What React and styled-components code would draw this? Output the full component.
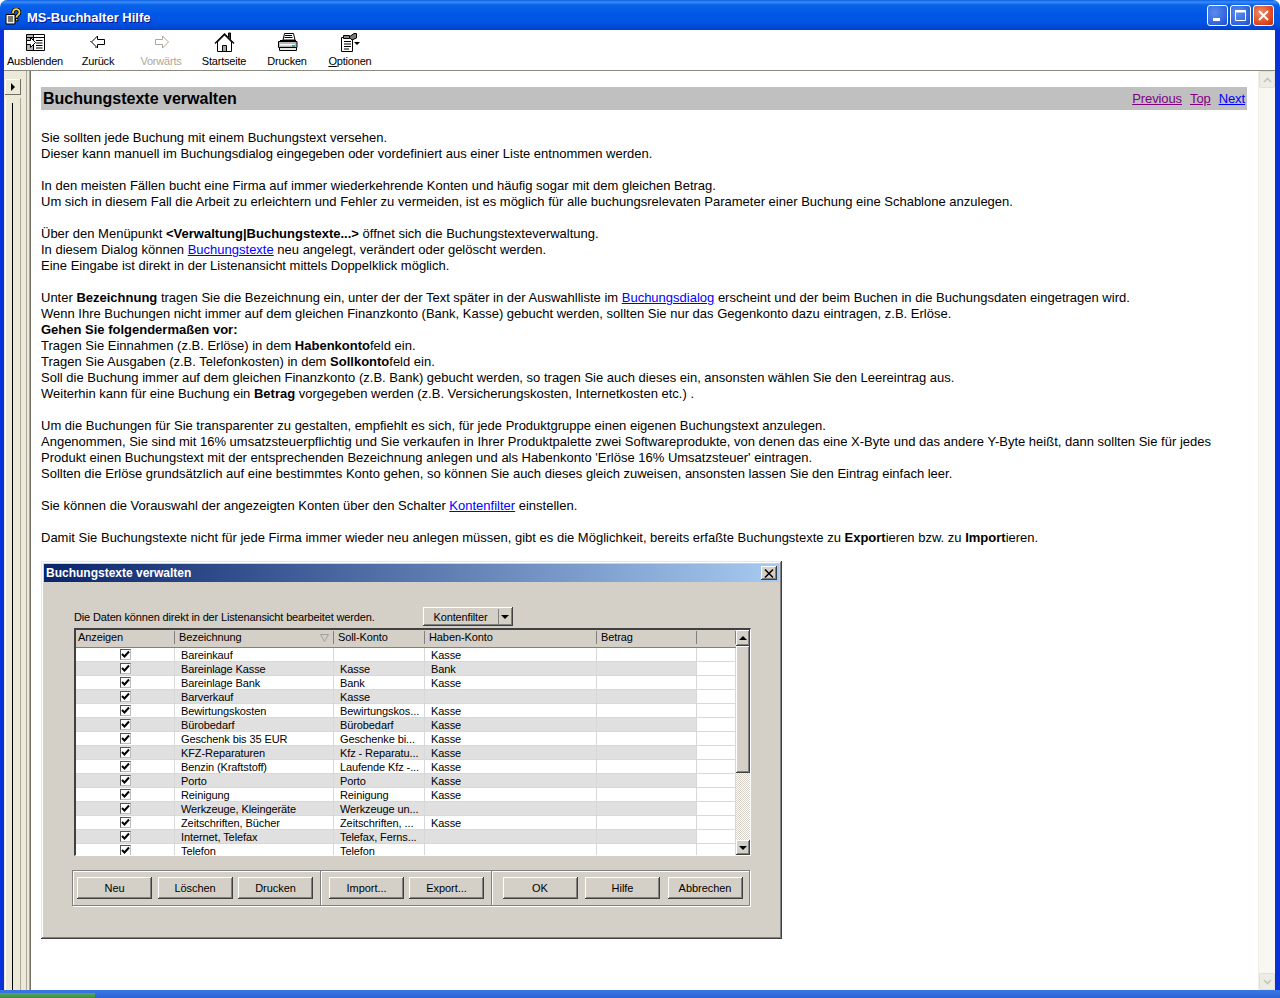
import React from "react";
import styled, { createGlobalStyle, css } from "styled-components";

const GlobalStyle = createGlobalStyle`
  html, body {
    margin: 0;
    padding: 0;
    height: 998px;
    overflow: hidden;
    background: #fff;
    font-family: "Liberation Sans", Arial, sans-serif;
    color: #000;
  }
`;

const raised = css`
  background-color: #d4d0c8;
  box-shadow: inset -1px -1px #404040, inset 1px 1px #fff, inset -2px -2px #808080;
`;

const Frame = styled.div`
  width: 1280px;
  height: 998px;
  display: flex;
  flex-direction: column;
  overflow: hidden;
`;

const TitleBar = styled.div`
  height: 30px;
  flex: none;
  display: flex;
  align-items: center;
  padding: 3px 6px 0 5px;
  box-sizing: border-box;
  border-radius: 7px 7px 0 0;
  background: linear-gradient(180deg, #0a5fe6 0, #3b8cf7 2px, #0a62ea 5px, #0058e6 14px, #0054e3 22px, #0048d8 27px, #0040c8 30px);
`;

const TitleText = styled.span`
  margin: 1px 0 0 6px;
  color: #fff;
  font-size: 13px;
  font-weight: 700;
  flex: 1;
  text-shadow: 1px 1px #0f1089;
`;

const WindowButton = styled.div`
  width: 21px;
  height: 21px;
  margin: -2px 0 0 2px;
  border: 1px solid #fff;
  border-radius: 3px;
  box-sizing: border-box;
  display: flex;
  align-items: center;
  justify-content: center;
  background: ${(p) =>
    p.$danger
      ? "radial-gradient(circle at 35% 35%, #f0906c, #d9431c 70%, #b8300f)"
      : "radial-gradient(circle at 35% 35%, #5c8cf0, #2f63dc 70%, #1f47c0)"};
`;

const Client = styled.div`
  flex: 1;
  min-height: 0;
  display: flex;
  flex-direction: column;
  border-left: 4px solid #0831d9;
  border-right: 5px solid #0831d9;
  background: #fff;
`;

const Toolbar = styled.div`
  height: 40px;
  flex: none;
  display: flex;
  border-bottom: 1px solid #8c8a7c;
  background: #fff;
`;

const ToolButton = styled.div`
  width: 63px;
  box-sizing: border-box;
  display: flex;
  flex-direction: column;
  align-items: center;
  padding: 2px 1px 0 0;
  font-size: 11px;
  line-height: 13px;
  letter-spacing: -0.2px;
  color: ${(p) => (p.$disabled ? "#aca899" : "#000")};
  svg {
    height: 21px;
    margin-bottom: 2px;
  }
  u {
    text-underline-offset: 1px;
  }
`;

const Body = styled.div`
  flex: 1;
  min-height: 0;
  display: flex;
`;

const NavPane = styled.div`
  width: 23px;
  flex: none;
  display: flex;
  flex-direction: column;
  background: #ece9d8;
  padding: 8px 0 0 1px;
  box-sizing: border-box;
  border-right: 1px solid #aca899;
`;

const NavButton = styled.div`
  width: 16px;
  height: 16px;
  display: flex;
  align-items: center;
  justify-content: center;
  background: #ece9d8;
  box-shadow: inset -1px -1px #716f64, inset 1px 1px #fff;
  &::before {
    content: "";
    border-left: 4px solid #000;
    border-top: 4px solid transparent;
    border-bottom: 4px solid transparent;
  }
`;

const NavStrip = styled.div`
  flex: 1;
  width: 16px;
  margin-top: 3px;
  display: flex;
  justify-content: center;
  box-shadow: inset -1px 0 #aca899, inset 1px 0 #fff;
  &::before {
    content: "";
    width: 1px;
    margin: 5px 1px 0 0;
    background: #000;
  }
`;

const Splitter = styled.div`
  width: 2px;
  flex: none;
  background: #ece9d8;
  border-right: 1px solid #aca899;
`;

const ContentEdge = styled.div`
  flex: 1;
  min-width: 0;
  display: flex;
  border-left: 1px solid #716f64;
`;

const Article = styled.div`
  flex: 1;
  min-width: 0;
  padding: 16px 11px 0 10px;
  font-size: 13px;
  line-height: 16px;
`;

const HeadingBar = styled.div`
  height: 23px;
  display: flex;
  align-items: center;
  justify-content: space-between;
  padding: 0 2px;
  margin-bottom: 20px;
  background: #c0c0c0;
`;

const Heading = styled.h1`
  margin: 0;
  font-size: 16px;
  font-weight: 700;
`;

const PageLinks = styled.div`
  display: flex;
  gap: 8px;
  font-size: 13px;
  letter-spacing: -0.1px;
`;

const Link = styled.a`
  color: ${(p) => (p.$visited ? "#800080" : "#0000ff")};
  text-decoration: underline;
`;

const Para = styled.p`
  margin: 0 0 16px;
  white-space: nowrap;
`;

const Dialog = styled.div`
  width: 741px;
  height: 378px;
  margin-top: -1px;
  box-sizing: border-box;
  padding: 3px;
  background: #d4d0c8;
  box-shadow: inset -1px -1px #404040, inset 1px 1px #e8e6e0, inset -2px -2px #808080, inset 2px 2px #fff;
  font-size: 11px;
  line-height: 14px;
`;

const DialogTitle = styled.div`
  height: 18px;
  display: flex;
  align-items: center;
  justify-content: space-between;
  padding: 0 2px;
  color: #fff;
  font-size: 12px;
  font-weight: 700;
  background: linear-gradient(90deg, #0a246a, #a6caf0);
`;

const CloseBox = styled.div`
  ${raised}
  width: 16px;
  height: 14px;
  display: flex;
  align-items: center;
  justify-content: center;
`;

const DialogBody = styled.div`
  padding: 23px 0 0 30px;
`;

const FilterRow = styled.div`
  height: 23px;
  display: flex;
  align-items: center;
`;

const FilterLabel = styled.span`
  width: 349px;
  letter-spacing: -0.15px;
`;

const FilterButton = styled.div`
  ${raised}
  width: 90px;
  height: 19px;
  display: flex;
  align-items: center;
`;

const FilterText = styled.span`
  width: 75px;
  text-align: center;
  letter-spacing: -0.15px;
`;

const FilterArrow = styled.span`
  flex: 1;
  height: 15px;
  display: flex;
  align-items: center;
  justify-content: center;
  border-left: 1px solid #808080;
  margin-right: 2px;
  &::before {
    content: "";
    border-top: 4px solid #000;
    border-left: 4px solid transparent;
    border-right: 4px solid transparent;
  }
`;

const ListView = styled.div`
  width: 677px;
  height: 228px;
  box-sizing: border-box;
  display: flex;
  overflow: hidden;
  background: #fff;
  border-top: 2px solid #404040;
  border-left: 2px solid #404040;
  border-right: 1px solid #fff;
  border-bottom: 1px solid #fff;
`;

const ListMain = styled.div`
  width: 660px;
  flex: none;
  overflow: hidden;
`;

const columns = "99px 159px 91px 172px 100px 39px";

const HeaderRow = styled.div`
  height: 17px;
  display: grid;
  grid-template-columns: ${columns};
  background: #d4d0c8;
  border-bottom: 1px solid #808080;
`;

const HeaderCell = styled.div`
  position: relative;
  padding-left: ${(p) => (p.$first ? "2px" : "4px")};
  border-right: 1px solid #808080;
  margin: 1px 0 3px;
  line-height: 13px;
  letter-spacing: -0.1px;
`;

const SortMark = styled.span`
  position: absolute;
  right: 4px;
  top: 3px;
  width: 9px;
  height: 8px;
  line-height: 0;
`;

const Row = styled.div`
  height: 14px;
  box-sizing: border-box;
  display: grid;
  grid-template-columns: ${columns};
  border-bottom: 1px solid #d8d8d8;
`;

const Cell = styled.div`
  padding-left: 6px;
  line-height: 14px;
  white-space: nowrap;
  overflow: hidden;
  letter-spacing: -0.1px;
  border-right: 1px solid #d8d8d8;
  background: ${(p) => (p.$shaded ? "#e0e0e0" : "#fff")};
`;

const CheckCell = styled(Cell)`
  padding-left: 1px;
  display: flex;
  justify-content: center;
  align-items: center;
`;

const CheckBox = styled.span`
  width: 11px;
  height: 11px;
  box-sizing: border-box;
  display: flex;
  align-items: center;
  justify-content: center;
  background: #fff;
  border-top: 1px solid #555;
  border-left: 1px solid #555;
  border-right: 1px solid #bbb;
  border-bottom: 1px solid #bbb;
`;

const ScrollColumn = styled.div`
  flex: 1;
  display: flex;
  flex-direction: column;
`;

const ScrollArrow = styled.div`
  ${raised}
  height: ${(p) => (p.$down ? "15px" : "16px")};
  flex: none;
  display: flex;
  align-items: center;
  justify-content: center;
  &::before {
    content: "";
    border-left: 4px solid transparent;
    border-right: 4px solid transparent;
    ${(p) => (p.$down ? "border-top: 4px solid #000;" : "border-bottom: 4px solid #000;")}
  }
`;

const ScrollThumb = styled.div`
  ${raised}
  height: 127px;
  flex: none;
`;

const ScrollTrack = styled.div`
  flex: 1;
  background: repeating-conic-gradient(#d4d0c8 0 25%, #fff 0 50%) 0 0 / 2px 2px;
`;

const ButtonGroup = styled.div`
  width: 678px;
  height: 36px;
  box-sizing: border-box;
  margin: 14px 0 0 -2px;
  padding-left: 4px;
  display: flex;
  align-items: center;
  border: 1px solid #808080;
  box-shadow: 1px 1px #fff, inset 1px 1px #fff;
`;

const Cluster = styled.div`
  display: flex;
  gap: ${(p) => p.$gap}px;
`;

const Divider = styled.div`
  width: 2px;
  height: 34px;
  margin: 0 ${(p) => p.$after}px 0 7px;
  background: linear-gradient(90deg, #808080 50%, #fff 50%);
`;

const DialogButton = styled.div`
  ${raised}
  width: 75px;
  height: 22px;
  display: flex;
  align-items: center;
  justify-content: center;
  letter-spacing: -0.05px;
`;

const PageScroll = styled.div`
  width: 17px;
  flex: none;
  display: flex;
  flex-direction: column;
  justify-content: space-between;
  background: #f8f7f2;
  border-left: 1px solid #f0efe8;
  box-sizing: border-box;
`;

const PageScrollButton = styled.div`
  height: 17px;
  display: flex;
  align-items: center;
  justify-content: center;
  background: #eeede5;
  border: 1px solid #e0dfd8;
  border-radius: 2px;
  box-sizing: border-box;
`;

const Taskbar = styled.div`
  height: 8px;
  flex: none;
  padding-top: 3px;
  box-sizing: border-box;
  background: linear-gradient(180deg, #3a78e4, #2a63d8);
`;

const StartStub = styled.div`
  width: 95px;
  height: 5px;
  background: linear-gradient(180deg, #5aa55a, #3c8f3c);
`;

const HelpIcon = () => (
  <svg width="16" height="17" viewBox="0 0 16 17">
    <path d="M1 6.5h9v9.5H1z" fill="#f4f2e6" stroke="#000" />
    <path d="M3 9h5M3 11h5M3 13h5" stroke="#000" />
    <path d="M8 5c0-5 6.5-5 6.5-.6 0 2.6-3 2.3-3 5" fill="none" stroke="#000" strokeWidth="3.4" />
    <path d="M8 5c0-5 6.5-5 6.5-.6 0 2.6-3 2.3-3 5" fill="none" stroke="#ffd83a" strokeWidth="1.8" />
    <path d="M10.5 10.5h2.4v2.4h-2.4z" fill="#ffd83a" stroke="#000" />
  </svg>
);

const HideIcon = () => (
  <svg width="21" height="21" viewBox="0 0 21 21">
    <path d="M1.5 2.5h18v16h-18z" fill="#fff" stroke="#000" />
    <path d="M2 3h6v15H2z" fill="#b8b8b8" />
    <path d="M1.5 5.5h18" stroke="#000" />
    <path d="M8.5 2.5v16" stroke="#000" />
    <path d="M11 8.5h6.5M11 11h6.5M11 13.5h6.5M11 16h6.5" stroke="#000" />
    <path d="M1.5 8.5h4v-3l5 5-5 5v-3h-4z" fill="#fff" stroke="#000" />
  </svg>
);

const ArrowIcon = ({ flip, color }) => (
  <svg width="21" height="21" viewBox="0 0 21 21">
    <path
      d={flip ? "M4.5 7.5h7V4l6 6-6 6v-3.5h-7z" : "M16.5 7.5h-7V4l-6 6 6 6v-3.5h7z"}
      fill="#fff"
      stroke={color}
    />
    {!flip && <path d="M2 9h1v1H2z" fill="#c03020" />}
    {!flip && <path d="M7 15h1v1H7z" fill="#30a030" />}
  </svg>
);

const HomeIcon = () => (
  <svg width="21" height="21" viewBox="0 0 21 21">
    <path d="M3.5 10v9.5h14V10L10.5 3z" fill="#fff" stroke="#000" />
    <path d="M1 11.5L10.5 2l9.5 9.5" fill="none" stroke="#000" strokeWidth="1.3" />
    <path d="M14.5 5V1h2v6" fill="#333" stroke="#000" />
    <path d="M8.5 13.5h4v6h-4z" fill="#a8a8a8" stroke="#000" />
  </svg>
);

const PrinterIcon = () => (
  <svg width="21" height="21" viewBox="0 0 21 21">
    <path d="M6 8l1.5-6.5h9L18 8z" fill="#fff" stroke="#000" />
    <path d="M8 3.5h7M7.5 5.5h8" stroke="#000" />
    <path d="M1.5 9.5H20v6H1.5z" fill="#b8b8b8" stroke="#000" />
    <path d="M3 8h16v2H3z" fill="#000" />
    <path d="M3 12h15v1.5H3z" fill="#fff" />
    <path d="M2.5 15.5h17v3h-17z" fill="#e8e8e8" stroke="#000" />
    <path d="M15 13h3v2h-3z" fill="#40a0a0" />
  </svg>
);

const OptionsIcon = () => (
  <svg width="21" height="21" viewBox="0 0 21 21">
    <path d="M1.5 5.5h11v14h-11z" fill="#fff" stroke="#000" />
    <path d="M3.5 3.5h6v3h-6z" fill="#888" stroke="#000" />
    <path d="M4 9.5h7M4 12h7M4 14.5h7M4 17h5" stroke="#000" />
    <path d="M9 5l5-3.5h2.5V6L12 8z" fill="#777" stroke="#000" />
    <path d="M14 10h6l-3 3z" fill="#000" />
  </svg>
);

const ChevronIcon = ({ down }) => (
  <svg width="9" height="6" viewBox="0 0 9 6">
    <path d={down ? "M1 1l3.5 3.5L8 1" : "M1 5l3.5-3.5L8 5"} fill="none" stroke="#c4c3ba" strokeWidth="1.6" />
  </svg>
);

const CheckMark = () => (
  <svg width="9" height="9" viewBox="0 0 9 9">
    <path d="M1 4l2.5 2.5L8 1.5" fill="none" stroke="#000" strokeWidth="2" />
  </svg>
);

const tools = [
  { label: "Ausblenden", icon: <HideIcon /> },
  { label: "Zurück", icon: <ArrowIcon color="#000" /> },
  { label: "Vorwärts", icon: <ArrowIcon flip color="#aca899" />, disabled: true },
  { label: "Startseite", icon: <HomeIcon /> },
  { label: "Drucken", icon: <PrinterIcon /> },
  { label: <><u>O</u>ptionen</>, icon: <OptionsIcon /> },
];

const bookings = [
  ["Bareinkauf", "", "Kasse"],
  ["Bareinlage Kasse", "Kasse", "Bank"],
  ["Bareinlage Bank", "Bank", "Kasse"],
  ["Barverkauf", "Kasse", ""],
  ["Bewirtungskosten", "Bewirtungskos...", "Kasse"],
  ["Bürobedarf", "Bürobedarf", "Kasse"],
  ["Geschenk bis 35 EUR", "Geschenke bi...", "Kasse"],
  ["KFZ-Reparaturen", "Kfz - Reparatu...", "Kasse"],
  ["Benzin (Kraftstoff)", "Laufende Kfz -...", "Kasse"],
  ["Porto", "Porto", "Kasse"],
  ["Reinigung", "Reinigung", "Kasse"],
  ["Werkzeuge, Kleingeräte", "Werkzeuge un...", ""],
  ["Zeitschriften, Bücher", "Zeitschriften, ...", "Kasse"],
  ["Internet, Telefax", "Telefax, Ferns...", ""],
  ["Telefon", "Telefon", ""],
];

const App = () => (
  <Frame>
    <GlobalStyle />
    <TitleBar>
      <HelpIcon />
      <TitleText>MS-Buchhalter Hilfe</TitleText>
      <WindowButton>
        <svg width="13" height="13" viewBox="0 0 13 13">
          <path d="M2 9h7v3H2z" fill="#fff" />
        </svg>
      </WindowButton>
      <WindowButton>
        <svg width="13" height="13" viewBox="0 0 13 13">
          <path d="M1.5 1.5h10v10h-10z" fill="none" stroke="#fff" />
          <path d="M1 1h11v2.5H1z" fill="#fff" />
        </svg>
      </WindowButton>
      <WindowButton $danger>
        <svg width="13" height="13" viewBox="0 0 13 13">
          <path d="M2 2l9 9M11 2l-9 9" stroke="#fff" strokeWidth="2" />
        </svg>
      </WindowButton>
    </TitleBar>
    <Client>
      <Toolbar>
        {tools.map((tool, i) => (
          <ToolButton key={i} $disabled={tool.disabled}>
            {tool.icon}
            <span>{tool.label}</span>
          </ToolButton>
        ))}
      </Toolbar>
      <Body>
        <NavPane>
          <NavButton />
          <NavStrip />
        </NavPane>
        <Splitter />
        <ContentEdge>
          <Article>
            <HeadingBar>
              <Heading>Buchungstexte verwalten</Heading>
              <PageLinks>
                <Link $visited>Previous</Link>
                <Link $visited>Top</Link>
                <Link>Next</Link>
              </PageLinks>
            </HeadingBar>
            <Para>
              Sie sollten jede Buchung mit einem Buchungstext versehen.<br />
              Dieser kann manuell im Buchungsdialog eingegeben oder vordefiniert aus einer Liste entnommen werden.
            </Para>
            <Para>
              In den meisten Fällen bucht eine Firma auf immer wiederkehrende Konten und häufig sogar mit dem gleichen Betrag.<br />
              Um sich in diesem Fall die Arbeit zu erleichtern und Fehler zu vermeiden, ist es möglich für alle buchungsrelevaten Parameter einer Buchung eine Schablone anzulegen.
            </Para>
            <Para>
              Über den Menüpunkt <b>&lt;Verwaltung|Buchungstexte...&gt;</b> öffnet sich die Buchungstexteverwaltung.<br />
              In diesem Dialog können <Link>Buchungstexte</Link> neu angelegt, verändert oder gelöscht werden.<br />
              Eine Eingabe ist direkt in der Listenansicht mittels Doppelklick möglich.
            </Para>
            <Para>
              Unter <b>Bezeichnung</b> tragen Sie die Bezeichnung ein, unter der der Text später in der Auswahlliste im <Link>Buchungsdialog</Link> erscheint und der beim Buchen in die Buchungsdaten eingetragen wird.<br />
              Wenn Ihre Buchungen nicht immer auf dem gleichen Finanzkonto (Bank, Kasse) gebucht werden, sollten Sie nur das Gegenkonto dazu eintragen, z.B. Erlöse.<br />
              <b>Gehen Sie folgendermaßen vor:</b><br />
              Tragen Sie Einnahmen (z.B. Erlöse) in dem <b>Habenkonto</b>feld ein.<br />
              Tragen Sie Ausgaben (z.B. Telefonkosten) in dem <b>Sollkonto</b>feld ein.<br />
              Soll die Buchung immer auf dem gleichen Finanzkonto (z.B. Bank) gebucht werden, so tragen Sie auch dieses ein, ansonsten wählen Sie den Leereintrag aus.<br />
              Weiterhin kann für eine Buchung ein <b>Betrag</b> vorgegeben werden (z.B. Versicherungskosten, Internetkosten etc.) .
            </Para>
            <Para>
              Um die Buchungen für Sie transparenter zu gestalten, empfiehlt es sich, für jede Produktgruppe einen eigenen Buchungstext anzulegen.<br />
              Angenommen, Sie sind mit 16% umsatzsteuerpflichtig und Sie verkaufen in Ihrer Produktpalette zwei Softwareprodukte, von denen das eine X-Byte und das andere Y-Byte heißt, dann sollten Sie für jedes<br />
              Produkt einen Buchungstext mit der entsprechenden Bezeichnung anlegen und als Habenkonto 'Erlöse 16% Umsatzsteuer' eintragen.<br />
              Sollten die Erlöse grundsätzlich auf eine bestimmtes Konto gehen, so können Sie auch dieses gleich zuweisen, ansonsten lassen Sie den Eintrag einfach leer.
            </Para>
            <Para>
              Sie können die Vorauswahl der angezeigten Konten über den Schalter <Link>Kontenfilter</Link> einstellen.
            </Para>
            <Para>
              Damit Sie Buchungstexte nicht für jede Firma immer wieder neu anlegen müssen, gibt es die Möglichkeit, bereits erfaßte Buchungstexte zu <b>Export</b>ieren bzw. zu <b>Import</b>ieren.
            </Para>
            <Dialog>
              <DialogTitle>
                <span>Buchungstexte verwalten</span>
                <CloseBox>
                  <svg width="10" height="9" viewBox="0 0 10 9">
                    <path d="M1 .5l8 8M9 .5l-8 8" stroke="#000" strokeWidth="1.5" />
                  </svg>
                </CloseBox>
              </DialogTitle>
              <DialogBody>
                <FilterRow>
                  <FilterLabel>Die Daten können direkt in der Listenansicht bearbeitet werden.</FilterLabel>
                  <FilterButton>
                    <FilterText>Kontenfilter</FilterText>
                    <FilterArrow />
                  </FilterButton>
                </FilterRow>
                <ListView>
                  <ListMain>
                    <HeaderRow>
                      <HeaderCell $first>Anzeigen</HeaderCell>
                      <HeaderCell>
                        Bezeichnung
                        <SortMark>
                          <svg width="9" height="8" viewBox="0 0 9 8">
                            <path d="M.5.5h8L4.5 7.5z" fill="none" stroke="#a0a0a0" />
                          </svg>
                        </SortMark>
                      </HeaderCell>
                      <HeaderCell>Soll-Konto</HeaderCell>
                      <HeaderCell>Haben-Konto</HeaderCell>
                      <HeaderCell>Betrag</HeaderCell>
                      <HeaderCell />
                    </HeaderRow>
                    {bookings.map(([name, soll, haben], i) => (
                      <Row key={name}>
                        <CheckCell $shaded={i % 2 === 1}>
                          <CheckBox>
                            <CheckMark />
                          </CheckBox>
                        </CheckCell>
                        <Cell $shaded={i % 2 === 1}>{name}</Cell>
                        <Cell $shaded={i % 2 === 1}>{soll}</Cell>
                        <Cell $shaded={i % 2 === 1}>{haben}</Cell>
                        <Cell $shaded={i % 2 === 1} />
                        <Cell />
                      </Row>
                    ))}
                  </ListMain>
                  <ScrollColumn>
                    <ScrollArrow />
                    <ScrollThumb />
                    <ScrollTrack />
                    <ScrollArrow $down />
                  </ScrollColumn>
                </ListView>
                <ButtonGroup>
                  <Cluster $gap={5.5}>
                    <DialogButton>Neu</DialogButton>
                    <DialogButton>Löschen</DialogButton>
                    <DialogButton>Drucken</DialogButton>
                  </Cluster>
                  <Divider $after={7} />
                  <Cluster $gap={5}>
                    <DialogButton>Import...</DialogButton>
                    <DialogButton>Export...</DialogButton>
                  </Cluster>
                  <Divider $after={9.5} />
                  <Cluster $gap={7.5}>
                    <DialogButton>OK</DialogButton>
                    <DialogButton>Hilfe</DialogButton>
                    <DialogButton>Abbrechen</DialogButton>
                  </Cluster>
                </ButtonGroup>
              </DialogBody>
            </Dialog>
          </Article>
          <PageScroll>
            <PageScrollButton>
              <ChevronIcon />
            </PageScrollButton>
            <PageScrollButton>
              <ChevronIcon down />
            </PageScrollButton>
          </PageScroll>
        </ContentEdge>
      </Body>
    </Client>
    <Taskbar>
      <StartStub />
    </Taskbar>
  </Frame>
);

export default App;
